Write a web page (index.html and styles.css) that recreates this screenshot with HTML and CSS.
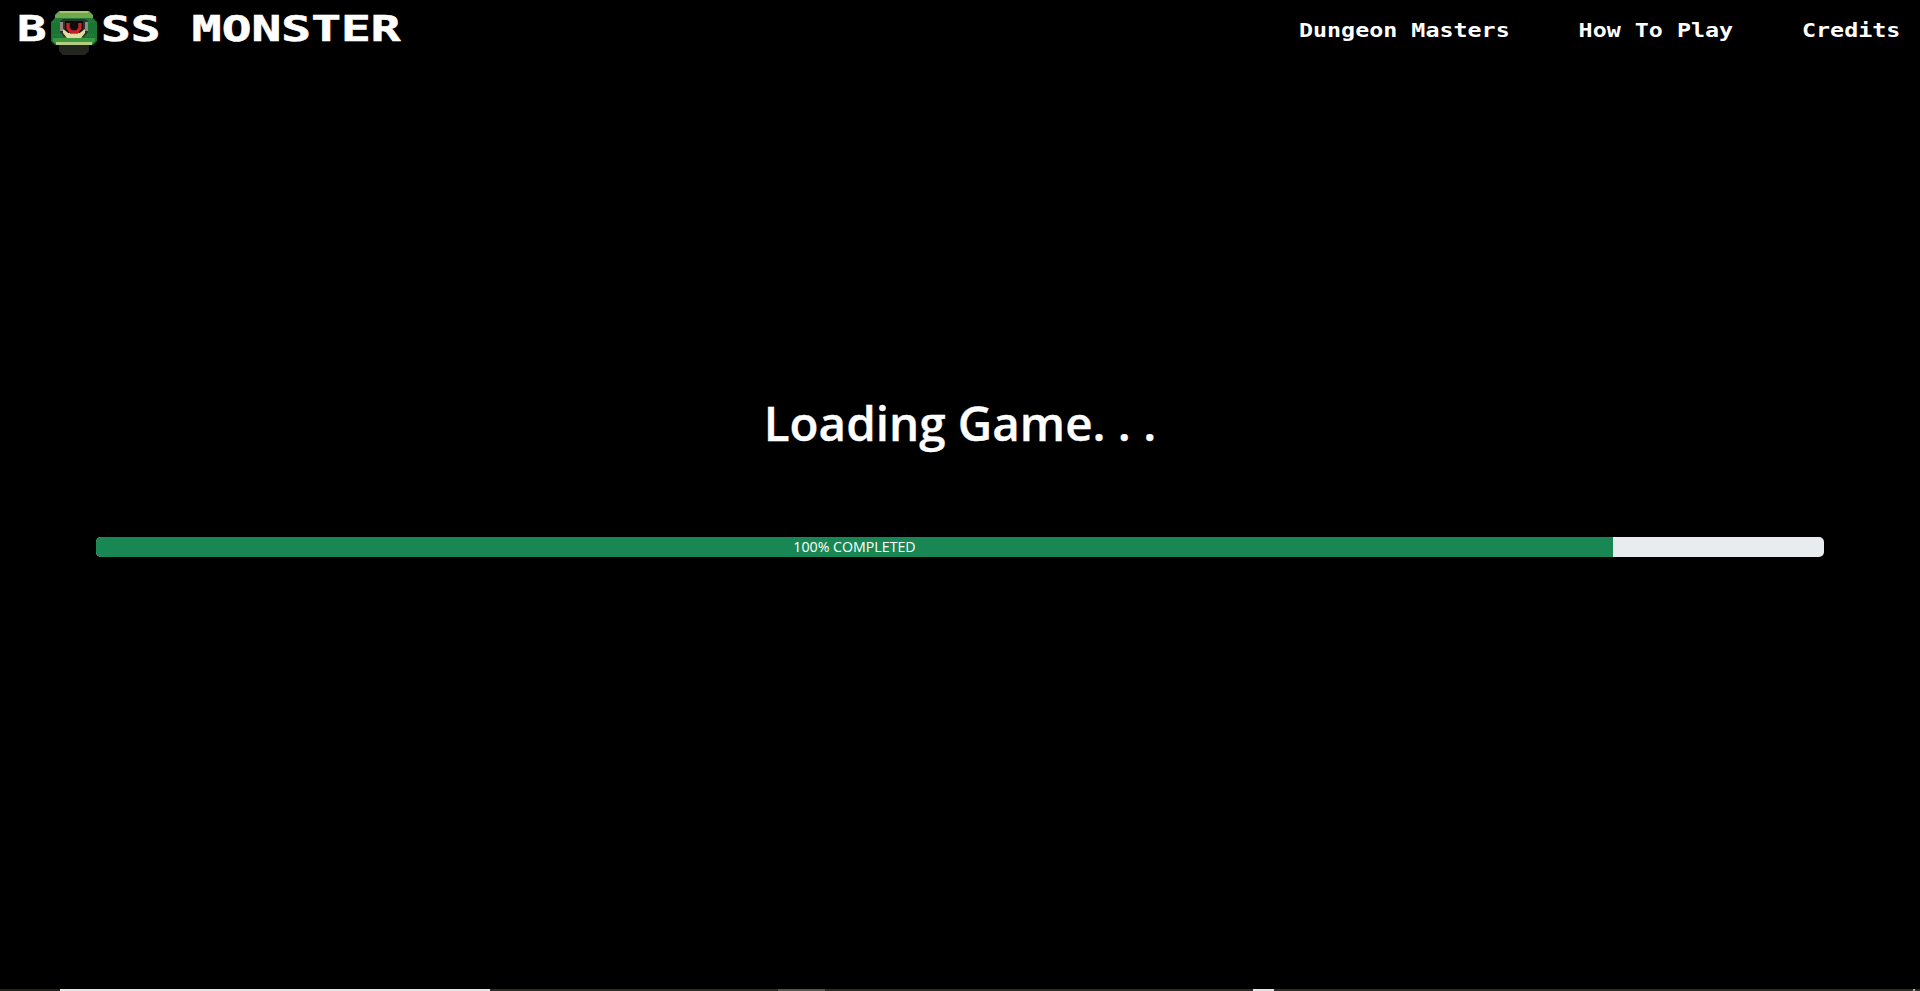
FILE: index.html
```html
<!DOCTYPE html>
<html lang="en">
<head>
<meta charset="utf-8">
<title>Boss Monster</title>
<link rel="stylesheet" href="styles.css">
</head>
<body>
<div class="page">
  <header class="nav">
    <a class="brand" href="#">
      <span class="brand-b">B</span>
      <svg class="brand-icon" viewBox="0 0 48 46" role="img" aria-label="O">
        <path fill="#23261f" d="M9 35h30v6l-4 4H13l-4-4z"/>
        <path fill="#6fa84e" d="M9 1h30l4 4v5H5V5z"/>
        <path fill="#a3c56c" d="M10 1h28v2H10z"/>
        <path fill="#1b7433" d="M5 8h38l4 4v19l-4 4H5l-4-4V12z"/>
        <path fill="none" stroke="#2f9642" stroke-width="1" stroke-dasharray="1 1" d="M5 9h38M3 12h42M3 25h42M3 29h42"/>
        <path fill="#3b9a3f" d="M3 28h42v3l-3 3H6l-3-3z"/>
        <path fill="#b4cd7e" d="M6 32h36v3H6z"/>
        <path fill="#2f332a" d="M10 11l3-2h22l3 2v11l-4 5H14l-4-5z"/>
        <path fill="#8d9080" d="M10 12h3v9h-3zM35 12h3v9h-3z"/>
        <path fill="#e4dba0" d="M13 19l4 3h14l4-3v4l-4 5H17l-4-5z"/>
        <path fill="#0d0d0b" d="M15 11h18v8l-3 4H18l-3-4z"/>
        <path fill="none" stroke="#c8212a" stroke-width="3.4" d="M18 13v5l3 4h6l3-4v-5"/>
      </svg>
      <span class="brand-rest">SS MONSTER</span>
    </a>
    <nav class="links">
      <a href="#">Dungeon Masters</a>
      <a href="#">How To Play</a>
      <a href="#">Credits</a>
    </nav>
  </header>
  <main class="loader">
    <h1 class="title">Loading Game. . .</h1>
    <div class="progress">
      <div class="progress-bar">100% COMPLETED</div>
    </div>
  </main>
  <div class="strip">
    <span class="s1"></span><span class="s2"></span><span class="s3"></span><span class="s4"></span><span class="s5"></span><span class="s6"></span><span class="s7"></span><span class="s8"></span><span class="s9"></span>
  </div>
</div>
</body>
</html>
```
FILE: styles.css
```css
* { box-sizing: border-box; }
html, body { margin: 0; height: 100%; background: #000; overflow: hidden; }
.page { height: 991px; display: flex; flex-direction: column; color: #fff; }
a { color: #fff; text-decoration: none; }
.nav { height: 60px; display: flex; justify-content: space-between; align-items: flex-start; padding: 0 20px 0 17px; flex: none; }
.brand { display: flex; align-items: flex-start; font-family: "DejaVu Sans Mono", monospace; font-weight: 700; font-size: 35px; -webkit-text-stroke: 0.6px #fff; }
.brand-b { display: block; width: 33px; height: 60px; line-height: 59px; transform: scaleX(1.4); transform-origin: left center; }
.brand-icon { width: 48px; height: 46px; margin-top: 10px; flex: none; }
.brand-rest { display: block; width: 300px; height: 60px; line-height: 59px; margin-left: 3px; white-space: pre; word-spacing: 1px; transform: scaleX(1.415); transform-origin: left center; }
.links { display: flex; gap: 59px; font-family: "DejaVu Sans Mono", monospace; font-weight: 700; font-size: 20px; line-height: 61px; transform: scaleX(1.167); transform-origin: right center; }
.loader { flex: 1; padding: 0 96px; }
.title { margin: 327px 0 0; height: 72px; font-family: "Open Sans", sans-serif; font-weight: 600; font-size: 47.5px; line-height: 72px; text-align: center; -webkit-text-stroke: 0.4px #fff; }
.progress { margin-top: 78px; height: 20px; border-radius: 5px; background: #e9ecef; overflow: hidden; display: flex; }
.progress-bar { width: 1517px; background: #198754; font-family: "Open Sans", sans-serif; font-size: 14.2px; line-height: 20px; text-align: center; color: #fff; }
.strip { flex: none; height: 2px; display: flex; background: #2a2e22; }
.strip span { display: block; height: 2px; }
.s1 { width: 60px; background: #24241f; }
.s2 { width: 430px; background: #e8e8e8; }
.s3 { width: 288px; background: #2a2e22; }
.s4 { width: 47px; background: #55584e; }
.s5 { width: 428px; background: #2a2e22; }
.s6 { width: 21px; background: #e4e4e4; }
.s7 { flex: 1; background: #2a2e22; }
.s8 { width: 2px; background: #b0b0b0; }
.s9 { width: 5px; background: #2a2e22; }
```
